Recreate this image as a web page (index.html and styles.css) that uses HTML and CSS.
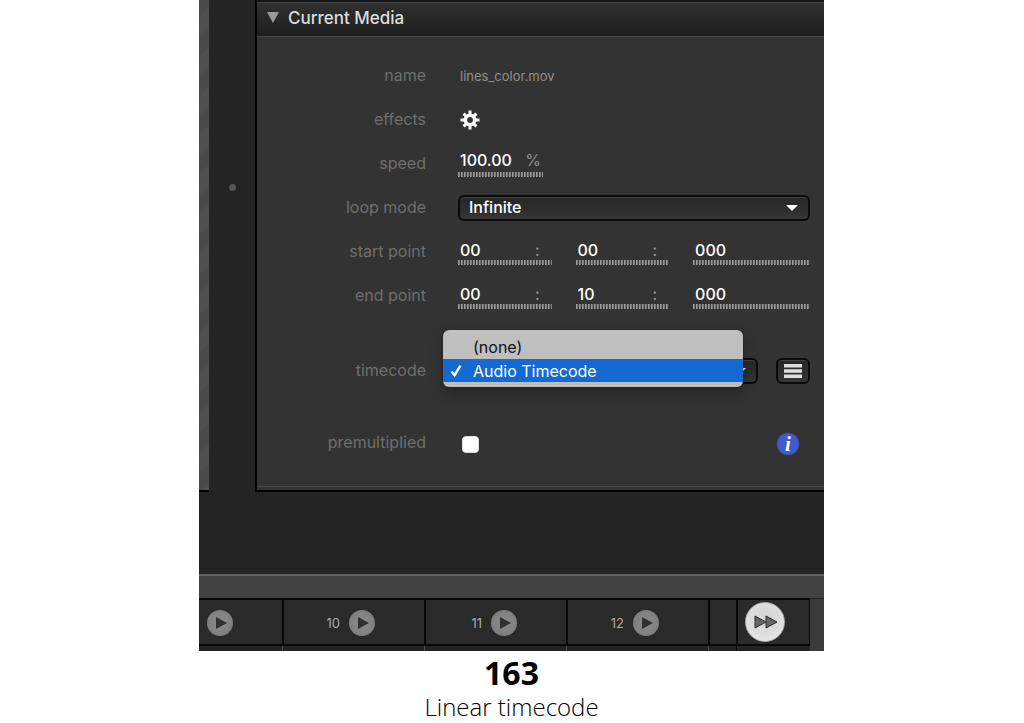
FILE: index.html
```html
<!DOCTYPE html>
<html lang="en">
<head>
<meta charset="utf-8">
<title>Linear timecode</title>
<link rel="stylesheet" href="styles.css">
</head>
<body>
<figure class="slide">
  <div class="app">
    <div class="workspace">
      <div class="preview"></div>
      <div class="gutter"><span class="grip"></span></div>
      <section class="panel">
        <h2 class="panel-head">
          <svg class="disclosure" viewBox="0 0 12 11" aria-hidden="true"><path d="M0 0H12L6 11Z"/></svg>
          Current Media
        </h2>
        <form class="panel-body">
          <div class="row">
            <span class="label">name</span>
            <span class="filename">lines_color.mov</span>
          </div>
          <div class="row">
            <span class="label">effects</span>
            <button class="gear" type="button" aria-label="effects">
              <svg viewBox="0 0 20 20" aria-hidden="true">
                <g stroke="#fff" stroke-width="3">
                  <path d="M10 .5V5M10 15V19.5M.5 10H5M15 10H19.5M3.6 3.6L6.6 6.6M13.4 13.4L16.4 16.4M16.4 3.6L13.4 6.6M6.6 13.4L3.6 16.4"/>
                </g>
                <circle cx="10" cy="10" r="4.7" fill="none" stroke="#fff" stroke-width="3.6"/>
              </svg>
            </button>
          </div>
          <div class="row">
            <label class="label" for="speed">speed</label>
            <span class="field field-speed"><input id="speed" value="100.00"><span class="unit">%</span></span>
          </div>
          <div class="row">
            <label class="label" for="loop">loop mode</label>
            <span class="picker">
              <select id="loop" class="select"><option>Infinite</option></select>
              <svg class="arrow" viewBox="0 0 12 6" aria-hidden="true"><path d="M0 0H12L6 6Z"/></svg>
            </span>
          </div>
          <div class="row">
            <label class="label" for="start">start point</label>
            <span class="times">
              <span class="field"><input id="start" value="00"><span class="colon">:</span></span>
              <span class="field"><input aria-label="start seconds" value="00"><span class="colon">:</span></span>
              <span class="field"><input aria-label="start milliseconds" value="000"></span>
            </span>
          </div>
          <div class="row">
            <label class="label" for="end">end point</label>
            <span class="times">
              <span class="field"><input id="end" value="00"><span class="colon">:</span></span>
              <span class="field"><input aria-label="end seconds" value="10"><span class="colon">:</span></span>
              <span class="field"><input aria-label="end milliseconds" value="000"></span>
            </span>
          </div>
          <div class="row row-timecode">
            <span class="label">timecode</span>
            <span class="timecode">
              <span class="picker">
                <button class="select" type="button" aria-label="timecode" aria-haspopup="listbox"></button>
                <svg class="arrow" viewBox="0 0 12 6" aria-hidden="true"><path d="M0 0H12L6 6Z"/></svg>
                <span class="menu" role="listbox" aria-label="timecode">
                  <button class="option" type="button" role="option" aria-selected="false">(none)</button>
                  <button class="option option-on" type="button" role="option" aria-selected="true">
                    <svg class="check" viewBox="0 0 12 13" aria-hidden="true"><path d="M1.5 7.5L4.6 11.2L10.4 1.6"/></svg>
                    Audio Timecode
                  </button>
                </span>
              </span>
              <button class="list" type="button" aria-label="timecode list">
                <svg viewBox="0 0 18 14" aria-hidden="true"><path d="M0 0H18V3.4H0ZM0 5.3H18V8.7H0ZM0 10.6H18V14H0Z"/></svg>
              </button>
            </span>
          </div>
          <div class="row row-premultiplied">
            <label class="label" for="pre">premultiplied</label>
            <span class="premultiplied">
              <input id="pre" class="tick" type="checkbox">
              <button class="info" type="button" aria-label="information">i</button>
            </span>
          </div>
        </form>
      </section>
    </div>
    <div class="divider"></div>
    <div class="tracks">
      <div class="cell"><button class="play" type="button" aria-label="play 9"><svg viewBox="0 0 11 12" aria-hidden="true"><path d="M0 0L11 6L0 12Z"/></svg></button></div>
      <div class="cell">10<button class="play" type="button" aria-label="play 10"><svg viewBox="0 0 11 12" aria-hidden="true"><path d="M0 0L11 6L0 12Z"/></svg></button></div>
      <div class="cell">11<button class="play" type="button" aria-label="play 11"><svg viewBox="0 0 11 12" aria-hidden="true"><path d="M0 0L11 6L0 12Z"/></svg></button></div>
      <div class="cell">12<button class="play" type="button" aria-label="play 12"><svg viewBox="0 0 11 12" aria-hidden="true"><path d="M0 0L11 6L0 12Z"/></svg></button></div>
      <div class="cell"></div>
      <div class="cell cell-forward">
        <button class="forward" type="button" aria-label="fast forward">
          <svg viewBox="0 0 24 14" aria-hidden="true"><path d="M1 1L12 7L1 13ZM12 1L23 7L12 13Z"/></svg>
        </button>
      </div>
      <div class="edge"></div>
    </div>
    <div class="tracks tracks-next">
      <div class="stub"></div><div class="stub"></div><div class="stub"></div><div class="stub"></div><div class="stub"></div><div class="stub stub-dark"></div><div class="edge"></div>
    </div>
  </div>
  <figcaption class="caption">
    <strong class="number">163</strong>
    <span class="title">Linear timecode</span>
  </figcaption>
</figure>
</body>
</html>
```

FILE: styles.css
```css
* { box-sizing: border-box; }

body {
  margin: 0;
  background: #fff;
  font-family: Inter, "Liberation Sans", sans-serif;
  font-size: 16px;
}

button, input, select {
  margin: 0;
  padding: 0;
  border: 0;
  background: none;
  color: inherit;
  font: inherit;
}

svg { display: block; }

.slide {
  margin: 0;
  padding: 0 200px 0 199px;
}

.app {
  background: #242424;
  color: #fff;
}

/* Upper workspace */
.workspace {
  display: flex;
  padding-bottom: 82px;
}

.preview {
  width: 10px;
  border-bottom: 2px solid #000;
  background: repeating-linear-gradient(135deg, #4a4a4a 0 10px, #505050 14px 24px, #4a4a4a 28px);
}

.gutter {
  display: flex;
  width: 46px;
  justify-content: center;
  padding-top: 184px;
}

.grip {
  width: 7px;
  height: 7px;
  border-radius: 50%;
  background: #555;
}

.panel {
  flex: 1;
  min-width: 0;
  border-left: 2px solid #000;
  border-bottom: 2px solid #000;
  background: #333;
}

.panel-head {
  display: flex;
  align-items: center;
  gap: 9px;
  height: 37px;
  margin: 0;
  padding: 0 10px 3px;
  border-top: 2px solid #151515;
  border-bottom: 1px solid #4a4a4a;
  background: linear-gradient(#303030, #1e1e1e);
  box-shadow: inset 0 1px #414141;
  color: #ddd;
  font-size: 17px;
  font-weight: 500;
}

.disclosure {
  width: 12px;
  height: 11px;
  fill: #999;
}

.panel-body {
  padding: 17px 14px 22px 0;
  border-bottom: 3px solid #333;
  box-shadow: inset 0 -1px #4a4a4a;
}

.row {
  display: grid;
  grid-template-columns: 169px 1fr;
  column-gap: 32px;
  align-items: center;
  height: 44px;
}

.row-timecode { margin-top: 31px; }
.row-premultiplied { margin-top: 28px; }

.label {
  padding-bottom: 2px;
  color: #6e6e6e;
  text-align: right;
}

.filename {
  padding-left: 2px;
  color: #8f8f8f;
  font-size: 13px;
}

.gear {
  width: 20px;
  margin-left: 2px;
}

/* Number fields sit on a row of small ticks */
.field {
  display: flex;
  align-items: center;
  min-width: 0;
  height: 26px;
  padding: 0 12px 5px 2px;
  background: repeating-linear-gradient(90deg, #9c9c9c 0 1px, #777 1px 2px, #3a3a3a 2px 3px) bottom / 100% 5px no-repeat;
}

.field input {
  flex: 1;
  min-width: 0;
  width: 0;
  height: 19px;
  font-weight: 500;
}

.field-speed {
  width: 85px;
  padding: 0 2px 8px 2px;
}

.unit { color: #8f8f8f; }
.colon { color: #999; }

.times {
  display: grid;
  grid-template-columns: 4fr 4fr 5fr;
  gap: 24px;
}

.picker {
  position: relative;
  display: flex;
  flex: 1;
}

.select, .list {
  height: 26px;
  border: 2px solid #0a0a0a;
  border-radius: 6px;
  background: linear-gradient(#262626, #353535);
  box-shadow: inset 0 1px #444;
}

.select {
  flex: 1;
  appearance: none;
  padding: 0 9px 2px;
  font-weight: 500;
}

.arrow {
  position: absolute;
  top: 10px;
  right: 12px;
  width: 12px;
  height: 6px;
  fill: #fff;
  pointer-events: none;
}

.timecode {
  display: flex;
  gap: 18px;
}

.list {
  display: flex;
  align-items: center;
  justify-content: center;
  width: 34px;
}

.list svg {
  width: 18px;
  height: 14px;
  fill: #ddd;
}

/* Open popup over the timecode picker */
.menu {
  position: absolute;
  top: -28px;
  left: -15px;
  display: flex;
  flex-direction: column;
  width: 100%;
  padding: 5px 0;
  border-radius: 6px;
  background: #bfbfbf;
  box-shadow: 0 6px 14px rgba(0, 0, 0, 0.3), 0 0 1px #000;
  color: #111;
}

.option {
  position: relative;
  height: 24px;
  padding-left: 30px;
  font-weight: 400;
  text-align: left;
}

.option-on {
  height: 23px;
  background: #146ad2;
  color: #fff;
}

.check {
  position: absolute;
  top: 5px;
  left: 7px;
  width: 12px;
  height: 13px;
  fill: none;
  stroke: #fff;
  stroke-width: 2.5;
}

.premultiplied {
  display: flex;
  align-items: center;
  justify-content: space-between;
  padding: 2px 11px 0 4px;
}

.tick {
  appearance: none;
  width: 17px;
  height: 17px;
  border: 1px solid #ddd;
  border-radius: 4px;
  background: #fff;
}

.info {
  width: 22px;
  height: 22px;
  border-radius: 50%;
  background: #4059ce;
  color: #fff;
  font: italic bold 21px/22px "Liberation Serif", serif;
}

/* Lower timeline */
.divider {
  height: 24px;
  border-top: 2px solid #626262;
  background: #424242;
}

.tracks {
  display: grid;
  grid-template-columns: 83fr 142fr 142fr 142fr 28px 74px 14px;
  height: 48px;
}

.cell {
  display: flex;
  align-items: center;
  justify-content: flex-end;
  gap: 9px;
  padding: 1px 49px 0 0;
  border: solid #080808;
  border-width: 2px 0 2px 2px;
  background: #2a2a2a;
  color: #aaa;
  font-size: 13px;
}

.cell:first-child { border-left: 0; }
.cell:empty { padding: 0; }

.play {
  display: flex;
  align-items: center;
  justify-content: center;
  width: 26px;
  height: 26px;
  padding-left: 2px;
  border-radius: 50%;
  background: radial-gradient(#8c8c8c, #818181 60%, #707070);
}

.play svg {
  width: 11px;
  height: 12px;
  fill: #303030;
}

.cell-forward {
  justify-content: flex-start;
  padding: 0 0 0 7px;
  border-right-width: 1px;
}

.forward {
  display: flex;
  align-items: center;
  justify-content: center;
  width: 40px;
  height: 40px;
  padding-left: 2px;
  border: 1px solid #aaa;
  border-radius: 50%;
  background: radial-gradient(circle at 50% 40%, #d4d4d4, #dedede 55%, #f2f2f2);
}

.forward svg {
  width: 24px;
  height: 14px;
  fill: #666;
  stroke: #2c2c2c;
}

.edge {
  border-top: 1px solid #222;
  background: #3b3b3b;
}

.tracks-next { height: 5px; }

.tracks-next .edge { border: 0; }

.stub {
  border-left: 1px solid #4c4c4c;
  background: #232323;
}

.stub:first-child { border-left: 0; }
.stub-dark { border-left-color: #080808; }

/* Caption */
.caption {
  display: flex;
  flex-direction: column;
  align-items: center;
  padding-top: 2px;
  color: #000;
  font-family: "Open Sans", "Noto Sans", sans-serif;
}

.number {
  font-size: 32px;
  font-weight: 700;
  line-height: 40px;
}

.title {
  font-size: 24px;
  font-weight: 350;
  line-height: 28px;
}
```
